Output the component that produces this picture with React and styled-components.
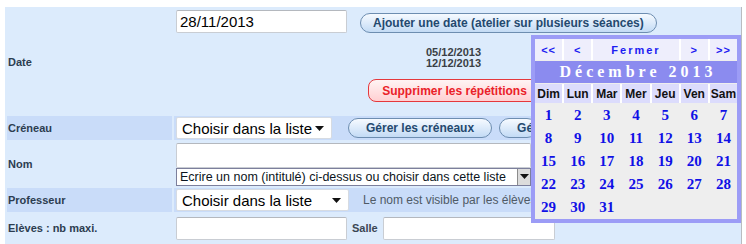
import React from "react";
import styled, { createGlobalStyle, css } from "styled-components";

const Global = createGlobalStyle`
  html, body { margin: 0; padding: 0; background: #fff; }
  body { font-family: "Liberation Sans", Arial, sans-serif; }
  * { box-sizing: border-box; }
`;

const Page = styled.div`
  position: relative;
  padding: 7px 4px 0 5px;
  width: 746px;
  height: 244px;
  overflow: hidden;
`;

const Form = styled.div`
  display: grid;
  grid-template-columns: 165px 1fr;
  grid-template-rows: 105px 24px 44px 24px 28px;
  gap: 2px;
  padding: 2px;
  background: #dcebfc;
  border-right: 1px solid #b9bcc0;
  width: 737px;
`;

const Label = styled.div`
  display: flex;
  align-items: center;
  padding-left: 1px;
  font-size: 11px;
  font-weight: bold;
  color: #2c3d50;
  background: ${(p) => (p.$shade ? "#c9dcf9" : "#dcebfc")};
`;

const Cell = styled.div`
  display: flex;
  align-items: center;
  gap: ${(p) => p.$gap || 0}px;
  padding: 0 2px;
  background: ${(p) => (p.$shade ? "#c9dcf9" : "#dcebfc")};
`;

const DateCell = styled.div`
  display: flex;
  flex-direction: column;
  padding: 1px 2px;
`;

const TopLine = styled.div`
  display: flex;
  align-items: flex-end;
  gap: 13px;
`;

const TextInput = styled.input`
  width: ${(p) => p.$w}px;
  height: ${(p) => p.$h || 23}px;
  border: 1px solid #c9cdd3;
  border-top-color: #b4b8be;
  border-radius: 2px;
  background: #fff;
  font-family: "Liberation Sans", Arial, sans-serif;
  font-size: 15px;
  color: #000;
  padding: 0 3px;
  outline: none;
`;

const SelectBox = styled.div`
  display: flex;
  align-items: center;
  justify-content: space-between;
  width: ${(p) => p.$w}px;
  height: 22px;
  background: #fff;
  border: 1px solid #d6dbe2;
  border-radius: 2px;
  padding: 0 7px 0 5px;
  font-size: 15px;
  color: #000;
`;

const Pill = styled.button`
  flex-shrink: 0;
  height: ${(p) => (p.$danger ? 23 : 20)}px;
  padding: 0 ${(p) => p.$px || 12}px;
  border-radius: ${(p) => (p.$danger ? 8 : 10)}px;
  font-family: "Liberation Sans", Arial, sans-serif;
  font-weight: bold;
  white-space: nowrap;
  overflow: hidden;
  cursor: pointer;
  ${(p) => p.$w && css`width: ${p.$w}px; text-align: left;`}
  ${(p) =>
    p.$danger
      ? css`
          border: 1px solid #e5383c;
          background: linear-gradient(#fff4f4, #ffd0d2);
          color: #ea2129;
          font-size: 12px;
        `
      : css`
          border: 1px solid #6d8db0;
          background: linear-gradient(#f6faff, #c3dbf5);
          color: #24496f;
          font-size: 12px;
        `}
`;

const Repeats = styled.div`
  align-self: center;
  margin: 14px 0 0 -6px;
  font-size: 11px;
  font-weight: bold;
  line-height: 11px;
  color: #3a3f45;
  text-align: center;
`;

const RedWrap = styled.div`
  align-self: center;
  margin: 10px 0 0 -4px;
  display: flex;
  justify-content: center;
`;

const NomCell = styled.div`
  display: flex;
  flex-direction: column;
  justify-content: center;
  padding: 0 2px;
`;

const ListSelect = styled.div`
  display: flex;
  align-items: center;
  justify-content: space-between;
  width: 355px;
  height: 18px;
  border: 1px solid #7c7f9c;
  background: #fff;
  font-size: 12.5px;
  color: #0b1420;
  padding-left: 3px;
  white-space: nowrap;
  overflow: hidden;
`;

const ArrowBox = styled.span`
  display: flex;
  flex-shrink: 0;
  align-items: center;
  justify-content: center;
  width: 13px;
  height: 16px;
  background: #dcdcdc;
  border-left: 1px solid #8c8c8c;
`;

const Hint = styled.span`
  font-size: 12px;
  color: #4f5a66;
  white-space: nowrap;
  overflow: hidden;
  width: 168px;
`;

const SmallLabel = styled.span`
  font-size: 11px;
  font-weight: bold;
  color: #3a4654;
`;

/* calendar */
const Calendar = styled.div`
  position: absolute;
  left: 531px;
  top: 35px;
  width: 210px;
  border: 4px solid #9c9cf6;
  background: #eeeeee;
  display: flex;
  flex-direction: column;
  gap: 1px;
`;

const NavRow = styled.div`
  display: grid;
  grid-template-columns: repeat(7, 1fr);
  gap: 2px;
  background: #fff;
  height: 21px;
`;

const NavCell = styled.div`
  grid-column: span ${(p) => p.$span || 1};
  display: flex;
  align-items: center;
  justify-content: center;
  background: #eeeefc;
  color: #1c1cf2;
  font-size: 11px;
  font-weight: bold;
  letter-spacing: ${(p) => (p.$span ? 2 : 1)}px;
`;

const MonthBar = styled.div`
  height: 22px;
  background: #8b8bef;
  color: #fff;
  display: flex;
  align-items: center;
  justify-content: center;
  font-family: "Liberation Serif", Georgia, serif;
  font-weight: bold;
  font-size: 16px;
  letter-spacing: 4px;
  white-space: nowrap;
  padding-left: 4px;
`;

const DayHead = styled.div`
  display: grid;
  grid-template-columns: repeat(7, 1fr);
  gap: 2px;
  background: #fff;
  height: 19px;
`;

const DayName = styled.div`
  display: flex;
  align-items: center;
  justify-content: center;
  background: #dcdcfc;
  color: #111;
  font-size: 12px;
  font-weight: bold;
`;

const Days = styled.div`
  display: grid;
  grid-template-columns: repeat(7, 1fr);
  grid-auto-rows: 23px;
  gap: 0 2px;
`;

const Day = styled.div`
  display: flex;
  align-items: center;
  justify-content: center;
  font-family: "Liberation Serif", Georgia, serif;
  font-weight: bold;
  font-size: 15px;
  line-height: 15px;
  color: #1010e6;
`;

const Arrow = () => (
  <svg width="9" height="5" viewBox="0 0 9 5">
    <path d="M0 0h9L4.5 5z" fill="#111" />
  </svg>
);

export default function App() {
  const names = ["Dim", "Lun", "Mar", "Mer", "Jeu", "Ven", "Sam"];
  const days = Array.from({ length: 31 }, (_, i) => i + 1);
  return (
    <>
      <Global />
      <Page>
        <Form>
          <Label>Date</Label>
          <DateCell>
            <TopLine>
              <TextInput $w={171} defaultValue="28/11/2013" />
              <Pill>Ajouter une date (atelier sur plusieurs séances)</Pill>
            </TopLine>
            <Repeats>
              05/12/2013
              <br />
              12/12/2013
            </Repeats>
            <RedWrap>
              <Pill $danger $px={13}>Supprimer les répétitions</Pill>
            </RedWrap>
          </DateCell>

          <Label $shade>Créneau</Label>
          <Cell $shade $gap={16}>
            <SelectBox $w={156}>
              Choisir dans la liste <Arrow />
            </SelectBox>
            <Pill $px={17}>Gérer les créneaux</Pill>
            <Pill $px={17} $w={38} style={{ marginLeft: -9 }}>Gé</Pill>
          </Cell>

          <Label>Nom</Label>
          <NomCell>
            <TextInput $w={355} $h={25} />
            <ListSelect>
              Ecrire un nom (intitulé) ci-dessus ou choisir dans cette liste
              <ArrowBox>
                <Arrow />
              </ArrowBox>
            </ListSelect>
          </NomCell>

          <Label $shade>Professeur</Label>
          <Cell $shade $gap={14}>
            <SelectBox $w={173}>
              Choisir dans la liste <Arrow />
            </SelectBox>
            <Hint>Le nom est visible par les élèves sur le planning</Hint>
          </Cell>

          <Label>Elèves : nb maxi.</Label>
          <Cell $gap={5}>
            <TextInput $w={171} />
            <SmallLabel>Salle</SmallLabel>
            <TextInput $w={172} />
          </Cell>
        </Form>

        <Calendar>
          <NavRow>
            <NavCell>&lt;&lt;</NavCell>
            <NavCell>&lt;</NavCell>
            <NavCell $span={3}>Fermer</NavCell>
            <NavCell>&gt;</NavCell>
            <NavCell>&gt;&gt;</NavCell>
          </NavRow>
          <MonthBar>Décembre 2013</MonthBar>
          <DayHead>
            {names.map((n) => (
              <DayName key={n}>{n}</DayName>
            ))}
          </DayHead>
          <Days>
            {days.map((d) => (
              <Day key={d}>{d}</Day>
            ))}
          </Days>
        </Calendar>
      </Page>
    </>
  );
}
